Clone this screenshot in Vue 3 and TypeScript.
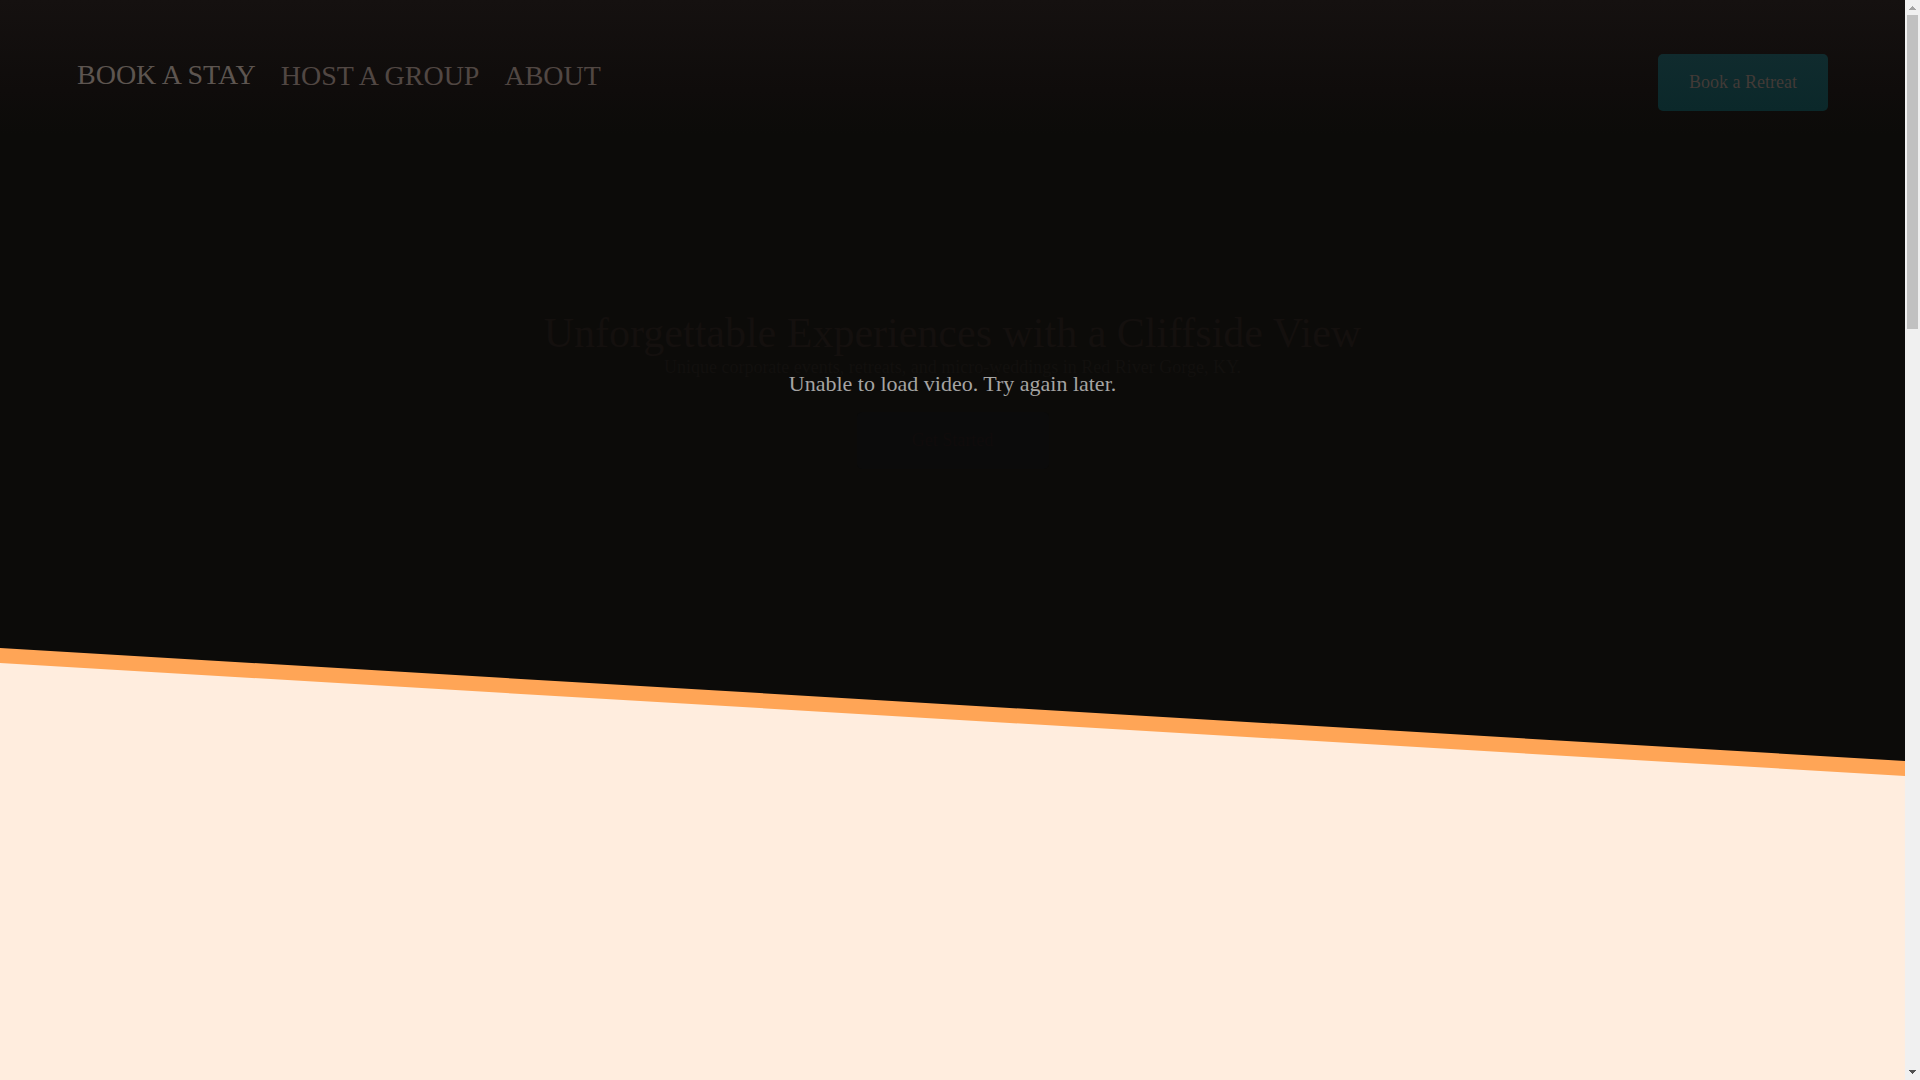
<script setup lang="ts">
interface NavLink {
  label: string
  href: string
}

const links: NavLink[] = [
  { label: 'HOST A GROUP', href: '#group' },
  { label: 'ABOUT', href: '#about' },
]
</script>

<template>
  <div class="window">
    <main class="page">
      <div class="edge">
        <section class="hero">
          <header class="bar">
            <nav class="nav" aria-label="Main">
              <a class="lead" href="#stay">BOOK A STAY</a>
              <a v-for="link in links" :key="link.href" :href="link.href">{{ link.label }}</a>
            </nav>
            <button class="btn retreat" type="button">Book a Retreat</button>
          </header>
          <div class="copy">
            <h1>Unforgettable Experiences with a Cliffside View</h1>
            <p>Unique corporate events, retreats, and micro-weddings in Red River Gorge, KY.</p>
            <button class="btn start" type="button">Get Started</button>
          </div>
          <div class="notice" role="alert">Unable to load video. Try again later.</div>
        </section>
      </div>
    </main>
    <div class="scroll" aria-hidden="true">
      <svg width="15" height="15" viewBox="0 0 15 15" shape-rendering="crispEdges">
        <path d="M7 6h1v1h1v1h1v1h1v1H4V9h1V8h1V7h1z" fill="#a3a3a3" />
      </svg>
      <div class="thumb"></div>
      <svg class="down" width="15" height="15" viewBox="0 0 15 15" shape-rendering="crispEdges">
        <path d="M4 5h7v1h-1v1H9v1H8v1H7V8H6V7H5V6H4z" fill="#505050" />
      </svg>
    </div>
  </div>
</template>

<style>
body {
  margin: 0;
  background: #ffedde;
}
</style>

<style scoped>
.window {
  display: flex;
  min-height: 100vh;
  font-family: 'Liberation Serif', 'Times New Roman', serif;
}

.page {
  flex: 1;
  min-width: 0;
  background: #ffedde;
}

.edge {
  padding-bottom: 15px;
  background: #ffa556;
  clip-path: polygon(0 0, 100% 0, 100% 100%, 0 calc(100% - 113px));
}

.hero {
  position: relative;
  min-height: 761px;
  background: linear-gradient(#151110 0, #0f0c0b 90px, #0c0b09 135px);
  clip-path: polygon(0 0, 100% 0, 100% 100%, 0 calc(100% - 113px));
}

.bar {
  display: flex;
  justify-content: space-between;
  align-items: flex-start;
  padding: 54px 77px 0;
}

.nav {
  display: flex;
  gap: 25px;
  padding-top: 6px;
}

.nav a {
  color: #514743;
  font-size: 28px;
  line-height: 32px;
  text-decoration: none;
}

.nav .lead {
  color: #5d5550;
  line-height: 30px;
}

.btn {
  height: 57px;
  border: 0;
  border-radius: 5px;
  font-family: inherit;
  font-size: 18px;
}

.retreat {
  width: 170px;
  background: linear-gradient(#102b2e, #0b282a);
  color: #423a37;
}

.copy {
  display: flex;
  flex-direction: column;
  align-items: center;
  padding-top: 198px;
  text-align: center;
}

h1 {
  margin: 0;
  color: #14100e;
  font-size: 42px;
  font-weight: 400;
  line-height: 48px;
}

p {
  margin: 0;
  color: #12100e;
  font-size: 18px;
  line-height: 20px;
}

.start {
  width: 192px;
  margin-top: 35px;
  background: #0b0b0b;
  color: #100c0c;
}

.notice {
  position: absolute;
  inset: 0;
  display: flex;
  align-items: center;
  justify-content: center;
  padding-top: 7px;
  color: #a5a4a3;
  font-size: 22px;
  pointer-events: none;
}

.scroll {
  display: flex;
  flex-direction: column;
  width: 15px;
  background: #f0f0f0;
}

.thumb {
  height: 314px;
  margin: 0 2px;
  background: #c1c1c1;
}

.down {
  margin-top: auto;
}
</style>
